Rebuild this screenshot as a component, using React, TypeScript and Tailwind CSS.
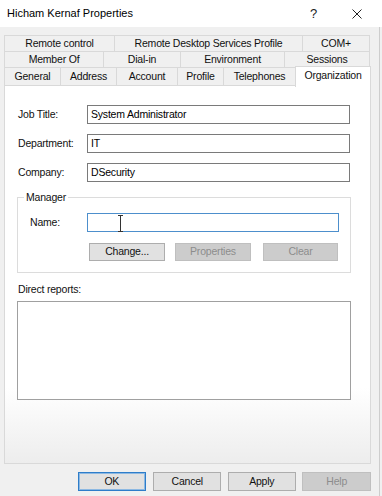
const ui = "font-['Liberation_Sans',Arial,sans-serif] tracking-[-0.2px]";

const tabRows = [
  [
    { label: 'Remote control', w: 'w-[111px]' },
    { label: 'Remote Desktop Services Profile', w: 'w-[189px]' },
    { label: 'COM+', w: 'w-[68px]' },
  ],
  [
    { label: 'Member Of', w: 'w-[100px]' },
    { label: 'Dial-in', w: 'w-[78px]' },
    { label: 'Environment', w: 'w-[105px]' },
    { label: 'Sessions', w: 'w-[86px]' },
  ],
];

const lastRow = [
  { label: 'General', w: 'w-[57px]' },
  { label: 'Address', w: 'w-[57px]' },
  { label: 'Account', w: 'w-[62px]' },
  { label: 'Profile', w: 'w-[47px]' },
  { label: 'Telephones', w: 'w-[73px]' },
];

function Field({ label, value }: { label: string; value: string }) {
  return (
    <div className="flex items-center h-[19px]">
      <span className="w-[69px] text-[10.5px] text-[#111]">{label}</span>
      <div className="w-[263px] h-[19px] border border-[#7a7a7a] bg-white flex items-center pl-[3px] text-[10.5px] text-black">
        {value}
      </div>
    </div>
  );
}

function Btn({ children, w, disabled, primary }: { children: string; w: string; disabled?: boolean; primary?: boolean }) {
  let cls = 'bg-[#e1e1e1] border-[#adadad] text-[#111]';
  if (disabled) cls = 'bg-[#cccccc] border-[#bfbfbf] text-[#8c8c8c]';
  if (primary) cls = 'bg-[#e1e1e1] border-[#2e7dc9] shadow-[inset_0_0_0_1px_#8cb8e2] text-[#111]';
  return (
    <button className={`${w} h-full border flex items-center justify-center text-[10.5px] ${cls}`}>
      {children}
    </button>
  );
}

export default function App() {
  return (
    <div className={`w-[382px] h-[496px] bg-[#f0f0f0] flex flex-col overflow-hidden ${ui}`}>
      {/* Title bar */}
      <div className="h-[27px] bg-white flex items-center pl-[7px] pr-[20px] shrink-0">
        <span className="text-[11px] tracking-normal text-black">Hicham Kernaf Properties</span>
        <span className="flex-1" />
        <span className="text-[13px] text-[#222] mr-[35px]">?</span>
        <svg width="10" height="10" viewBox="0 0 10 10" className="text-[#222]">
          <path d="M0.5 0.5 L9.5 9.5 M9.5 0.5 L0.5 9.5" stroke="currentColor" strokeWidth="1" />
        </svg>
      </div>

      {/* Body */}
      <div className="flex-1 w-[380px] border-r border-[#cdcdcd] pl-[4px] pr-[8px] pt-[8px] flex flex-col">
        {/* Tabs */}
        {tabRows.map((row, i) => (
          <div key={i} className={`flex h-[17px] ${i > 0 ? '-mt-px' : ''}`}>
            {row.map((t) => (
              <div
                key={t.label}
                className={`${t.w} h-full border border-[#d9d9d9] -ml-px first:ml-0 flex items-center justify-center text-[10.5px] text-[#111]`}
              >
                {t.label}
              </div>
            ))}
          </div>
        ))}
        <div className="flex items-end h-[19px] -mt-px">
          {lastRow.map((t) => (
            <div
              key={t.label}
              className={`${t.w} h-full border border-[#d9d9d9] -ml-px first:ml-0 flex items-center justify-center text-[10.5px] text-[#111]`}
            >
              {t.label}
            </div>
          ))}
          <div className="relative z-10 w-[76px] h-[21px] -mb-px -ml-px bg-white border border-b-0 border-[#d9d9d9] flex items-center justify-center pb-[2px] text-[10.5px] text-[#111]">
            Organization
          </div>
        </div>

        {/* Panel */}
        <div className="h-[379px] -mt-px border border-[#d9d9d9] bg-linear-to-b from-white from-80% to-[#ededed] pl-[13px] pt-[19px]">
          <div className="flex flex-col gap-[10px]">
            <Field label="Job Title:" value="System Administrator" />
            <Field label="Department:" value="IT" />
            <Field label="Company:" value="DSecurity" />
          </div>

          <fieldset className="ml-[-1px] mt-[9px] w-[334px] border border-[#dcdcdc] pb-[11px]">
            <legend className="ml-[6px] px-[2px] leading-[13px] text-[10.5px] text-[#111]">Manager</legend>
            <div className="flex items-center h-[19px] mt-[9px] pl-[12px]">
              <span className="w-[57px] text-[10.5px] text-[#111]">Name:</span>
              <div className="relative w-[252px] h-[19px] border border-[#4d8fcc] bg-white">
                <svg width="7" height="17" viewBox="0 0 7 17" className="absolute left-[29px] top-[1px] text-[#333]">
                  <path d="M1 0.5 H6 M1 16.5 H6 M3.5 0.5 V16.5" stroke="currentColor" strokeWidth="1" fill="none" />
                </svg>
              </div>
            </div>
            <div className="flex h-[18px] mt-[11px] ml-[71px]">
              <Btn w="w-[76px]">Change...</Btn>
              <span className="w-[10px]" />
              <Btn w="w-[76px]" disabled>Properties</Btn>
              <span className="w-[12px]" />
              <Btn w="w-[75px]" disabled>Clear</Btn>
            </div>
          </fieldset>

          <div className="mt-[10px] leading-[13px] text-[10.5px] text-[#111]">Direct reports:</div>
          <div className="ml-[-1px] mt-[5px] w-[334px] h-[99px] border border-[#a0a0a0] bg-white" />
        </div>

        {/* Dialog buttons */}
        <div className="flex h-[19px] mt-[8px] ml-[74px]">
          <Btn w="w-[68px]" primary>OK</Btn>
          <span className="w-[8px]" />
          <Btn w="w-[68px]">Cancel</Btn>
          <span className="w-[7px]" />
          <Btn w="w-[68px]">Apply</Btn>
          <span className="w-[7px]" />
          <Btn w="w-[69px]" disabled>Help</Btn>
        </div>
      </div>
    </div>
  );
}
